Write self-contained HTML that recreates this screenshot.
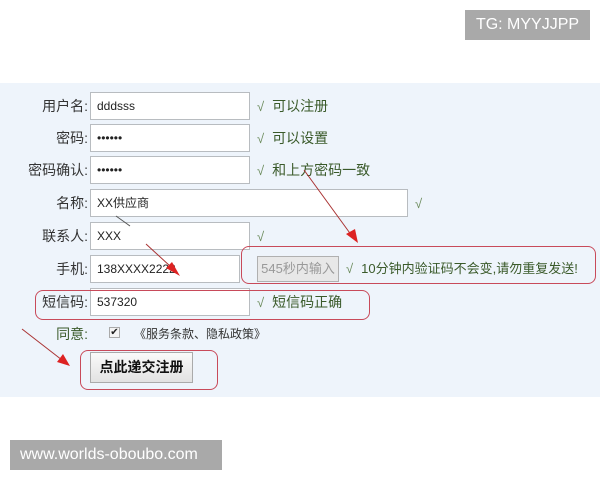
<!DOCTYPE html>
<html><head><meta charset="utf-8"><style>
*{margin:0;padding:0;box-sizing:border-box}
body{width:600px;height:480px;background:#fff;position:relative;overflow:hidden;font-family:"Liberation Sans","Noto Sans CJK SC",sans-serif}
.panel{position:absolute;left:0;top:83px;width:600px;height:314px;background:#eef4fb}
.lab{position:absolute;right:512px;font-size:14px;color:#333;line-height:28px}
.inp{position:absolute;left:90px;width:160px;height:28px;background:#fff;border:1px solid #b8bcc0;font-size:12px;line-height:26px;padding-left:6px;color:#222}
.ok{position:absolute;font-size:14px;color:#3a5a2a;line-height:28px}
.ck{color:#6a8a5a;font-size:13px;margin-right:8px}
.wm{position:absolute;background:#a9a9a9;color:#fff;font-size:16px}
.red{position:absolute;border:1.5px solid #c84a5a;border-radius:8px}
</style></head><body>
<div class="wm" style="left:465px;top:10px;width:125px;height:30px;line-height:30px;text-align:center">TG: MYYJJPP</div>
<div class="panel"></div>

<div class="lab" style="top:92px">用户名:</div><div class="inp" style="top:92px">dddsss</div><div class="ok" style="left:257px;top:92px"><span class="ck">√</span>可以注册</div>
<div class="lab" style="top:124px">密码:</div><div class="inp" style="top:124px">••••••</div><div class="ok" style="left:257px;top:124px"><span class="ck">√</span>可以设置</div>
<div class="lab" style="top:156px">密码确认:</div><div class="inp" style="top:156px">••••••</div><div class="ok" style="left:257px;top:156px"><span class="ck">√</span>和上方密码一致</div>
<div class="lab" style="top:189px">名称:</div><div class="inp" style="top:189px;width:318px">XX供应商</div><div class="ok" style="left:415px;top:189px"><span class="ck">√</span></div>
<div class="lab" style="top:222px">联系人:</div><div class="inp" style="top:222px">XXX</div><div class="ok" style="left:257px;top:222px"><span class="ck">√</span></div>
<div class="lab" style="top:255px">手机:</div><div class="inp" style="top:255px;width:150px">138XXXX2222</div>
<div style="position:absolute;left:257px;top:256px;width:82px;height:26px;background:#e8e8e8;border:1px solid #b0b0b0;color:#999;font-size:13px;line-height:24px;text-align:center">545秒内输入</div>
<div class="ok" style="left:346px;top:255px;color:#3a5a2a;font-size:13px"><span class="ck">√</span>10分钟内验证码不会变,请勿重复发送!</div>
<div class="red" style="left:241px;top:246px;width:355px;height:38px"></div>
<div class="lab" style="top:288px">短信码:</div><div class="inp" style="top:288px">537320</div><div class="ok" style="left:257px;top:288px"><span class="ck">√</span>短信码正确</div>
<div class="red" style="left:35px;top:290px;width:335px;height:30px"></div>
<div class="lab" style="top:320px;right:512px;color:#3a5a2a">同意:</div>
<div style="position:absolute;left:109px;top:327px;width:11px;height:11px;border:1px solid #aaa;background:#f4f4f4;font-size:10px;line-height:9px;text-align:center;color:#222">✔</div>
<div style="position:absolute;left:134px;top:320px;font-size:12px;line-height:28px;color:#333">《服务条款、隐私政策》</div>
<div class="red" style="left:80px;top:350px;width:138px;height:40px"></div>
<div style="position:absolute;left:90px;top:352px;width:103px;height:31px;background:linear-gradient(#fafafa,#e2e2e2);border:1px solid #aaa;font-weight:bold;font-size:14px;line-height:29px;text-align:center;color:#111">点此递交注册</div>
<svg style="position:absolute;left:0;top:0" width="600" height="480">
<line x1="304" y1="170" x2="352" y2="236" stroke="#a33" stroke-width="1"/>
<polygon points="346,234 358,243 355,229" fill="#d22"/>
<line x1="116" y1="216" x2="130" y2="226" stroke="#555" stroke-width="1"/>
<line x1="146" y1="244" x2="170" y2="266" stroke="#a33" stroke-width="1"/>
<polygon points="166,268 180,276 172,262" fill="#d22"/>
<line x1="22" y1="329" x2="62" y2="360" stroke="#a33" stroke-width="1"/>
<polygon points="57,362 70,366 63,354" fill="#d22"/>
</svg>
<div class="wm" style="left:10px;top:440px;width:212px;height:30px;line-height:30px;font-size:16px;padding-left:10px">www.worlds-oboubo.com</div>
</body></html>
